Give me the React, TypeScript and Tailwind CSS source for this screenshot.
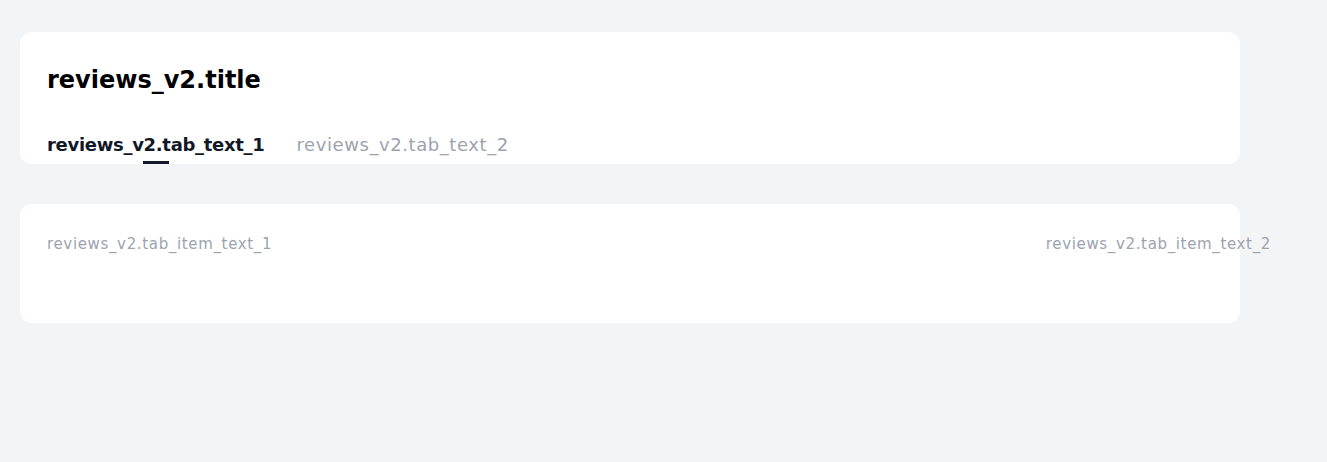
import React from "react";

const tabs = ["reviews_v2.tab_text_1", "reviews_v2.tab_text_2"];

export default function App() {
  const [active, setActive] = React.useState(0);
  return (
    <div
      className="min-h-[462px] bg-[#f3f4f6] pt-8 pl-5 pr-[87px]"
      style={{ fontFamily: "'DejaVu Sans', sans-serif" }}
    >
      <div className="rounded-xl bg-white px-[27px] pt-[30px]">
        <h1 className="text-[24px] font-semibold leading-[36px] text-black">reviews_v2.title</h1>
        <div className="mt-[33px] flex gap-8">
          {tabs.map((t, i) => (
            <button
              key={t}
              onClick={() => setActive(i)}
              className={
                "relative pb-[5px] text-[18px] leading-[28px] " +
                (i === active
                  ? "font-semibold tracking-[-0.3px] text-[#111827]"
                  : "tracking-[0.57px] text-[#9ca3af]")
              }
            >
              {t}
              {i === active && (
                <span className="absolute bottom-0 left-1/2 h-[3px] w-[26px] -translate-x-1/2 bg-[#111827]" />
              )}
            </button>
          ))}
        </div>
      </div>
      <div className="mt-10 h-[119px] rounded-xl bg-white px-[27px] pt-[29px]">
        <div className="-mr-[58px] flex justify-between text-[15px] leading-[22px] tracking-[0.65px] text-[#9ca3af]">
          <span>reviews_v2.tab_item_text_1</span>
          <span>reviews_v2.tab_item_text_2</span>
        </div>
      </div>
    </div>
  );
}
